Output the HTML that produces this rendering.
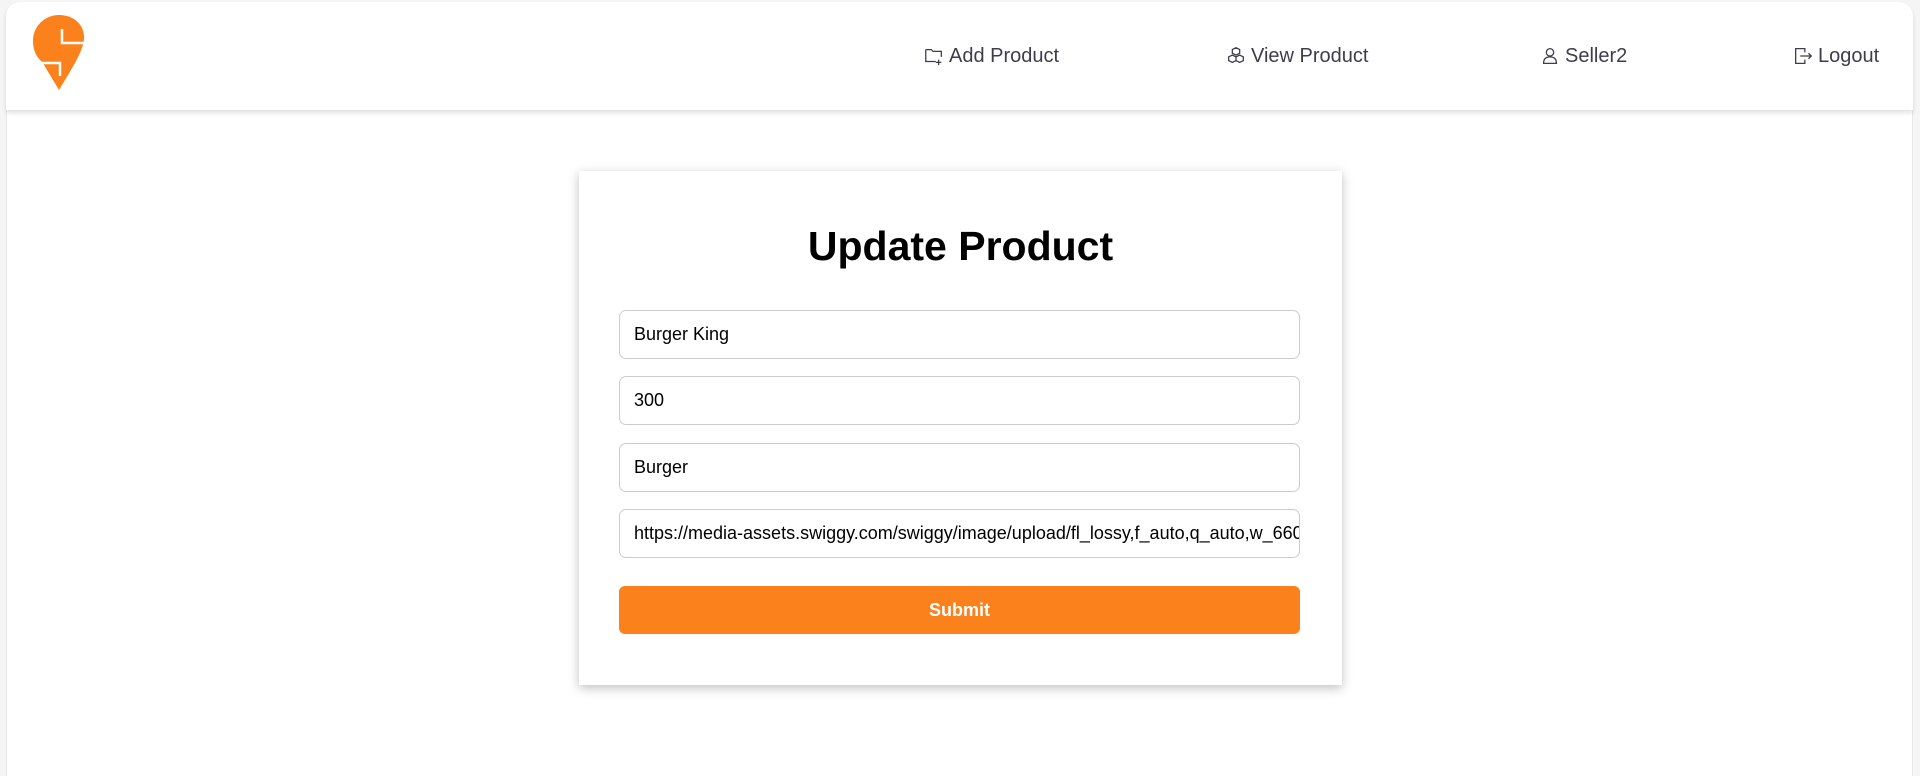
<!DOCTYPE html>
<html><head><meta charset="utf-8"><style>
*{box-sizing:border-box;margin:0;padding:0}
html,body{width:1920px;height:776px;overflow:hidden}
body{background:#f5f5f5;font-family:"Liberation Sans",Arial,sans-serif;position:relative}
.wrap{position:absolute;left:6px;top:2px;width:1907px;height:774px;background:#fff;border-radius:14px 14px 0 0;border:1px solid #e8e8e8;border-bottom:none}
.hdr{position:absolute;height:108px;border-radius:14px 14px 0 0;box-shadow:0 3px 5px rgba(0,0,0,.12);background:#fff}
.nav{position:absolute;top:43px;font-size:20px;color:#3d3d4e;display:flex;align-items:center;gap:4px;height:26px}
.nav svg{width:22px;height:22px;stroke:#3d3d4e;fill:none;stroke-width:1.4}
.card{position:absolute;left:579px;top:171px;width:763px;height:514px;background:#fff;box-shadow:0 3px 10px rgba(0,0,0,.25)}
h1{position:absolute;top:52px;width:100%;text-align:center;font-size:41px;font-weight:bold;color:#000}
.in{position:absolute;left:40px;width:681px;height:49px;border:1px solid #ccc;border-radius:7px;font-size:18px;padding-left:14px;padding-right:14px;line-height:47px;color:#000;white-space:nowrap;overflow:hidden}
.btn{position:absolute;left:40px;top:415px;width:681px;height:48px;background:#fb811c;border-radius:6px;color:#fff;font-weight:bold;font-size:18px;text-align:center;line-height:48px}
</style></head><body>
<div class="wrap"></div>
<div class="hdr" style="left:6px;top:2px;width:1907px"></div>
<svg style="position:absolute;left:33px;top:15px" width="52" height="76" viewBox="0 0 52 76">
<path fill="#fb811c" d="M26,0 C41,0 52,10 51,24 C50,36 40,52 26,75 L11,50 L11,48 C4,44 0,36 0,26 C0,11 12,0 26,0Z"/>
<path fill="none" stroke="#fff" stroke-width="2.5" d="M29,14 V28 H53"/>
<path fill="none" stroke="#fff" stroke-width="2.5" d="M0,48 H27 V61"/>
</svg>
<div class="nav" style="left:923px"><svg viewBox="0 0 24 24"><path d="M3 5h6l2 2h9v6M3 5v13h11"/><path d="M17 16v6M14 19h6"/></svg>Add Product</div>
<div class="nav" style="left:1225px"><svg viewBox="0 0 24 24"><path d="M12 3l4 2v4l-4 2-4-2V5zM8 11l4 2v4l-4 2-4-2v-4zM16 11l4 2v4l-4 2-4-2v-4z"/></svg>View Product</div>
<div class="nav" style="left:1539px"><svg viewBox="0 0 24 24"><circle cx="12" cy="8" r="4"/><path d="M5 20c0-5 3-7 7-7s7 2 7 7z"/></svg>Seller2</div>
<div class="nav" style="left:1792px"><svg viewBox="0 0 24 24"><path d="M14 8V4H4v16h10v-4M9 12h12M18 9l3 3-3 3"/></svg>Logout</div>
<div class="card">
<h1>Update Product</h1>
<div class="in" style="top:139px">Burger King</div>
<div class="in" style="top:205px">300</div>
<div class="in" style="top:272px">Burger</div>
<div class="in" style="top:338px">https://media-assets.swiggy.com/swiggy/image/upload/fl_lossy,f_auto,q_auto,w_660</div>
<div class="btn">Submit</div>
</div>
</body></html>
